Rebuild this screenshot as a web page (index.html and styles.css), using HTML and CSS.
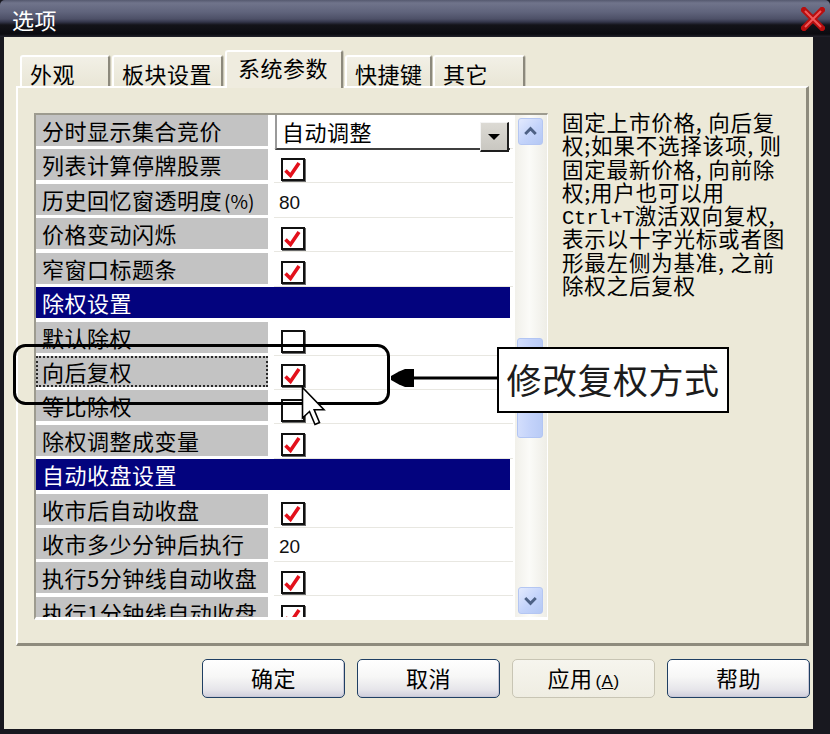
FILE: index.html
```html
<!DOCTYPE html>
<html lang="zh-CN">
<head>
<meta charset="utf-8">
<title>选项</title>
<link rel="stylesheet" href="styles.css">
</head>
<body>
<div class="window">
  <div class="titlebar">
    <span class="title">选项</span>
    <svg class="close" width="24" height="24" viewBox="0 0 24 24">
      <path d="M3 3 L21 21 M21 3 L3 21" stroke="#B80E0E" stroke-width="6" stroke-linecap="square"/>
      <path d="M4 4 L20 20 M20 4 L4 20" stroke="#F0585A" stroke-width="2"/>
    </svg>
  </div>
  <div class="client">
    <div class="tabs">
      <div class="tab w1">外观</div>
      <div class="tab w2">板块设置</div>
      <div class="tab w3 active">系统参数</div>
      <div class="tab w4">快捷键</div>
      <div class="tab w5">其它</div>
    </div>
    <div class="panel">
      <div class="grid">
        <div class="rows">
          <div class="row">
            <div class="label">分时显示集合竞价</div>
            <div class="value">
              <div class="combo"><span class="combo-text">自动调整</span><span class="drop"><i class="tri"></i></span></div>
            </div>
          </div>
          <div class="row">
            <div class="label">列表计算停牌股票</div>
            <div class="value"><span class="cb"><svg viewBox="0 0 19 19"><polyline points="2.5,10.5 7.5,15.5 16,3" fill="none" stroke="#E3101B" stroke-width="3.6"/></svg></span></div>
          </div>
          <div class="row">
            <div class="label">历史回忆窗透明度<span class="pct">(%)</span></div>
            <div class="value"><span class="num">80</span></div>
          </div>
          <div class="row">
            <div class="label">价格变动闪烁</div>
            <div class="value"><span class="cb"><svg viewBox="0 0 19 19"><polyline points="2.5,10.5 7.5,15.5 16,3" fill="none" stroke="#E3101B" stroke-width="3.6"/></svg></span></div>
          </div>
          <div class="row">
            <div class="label">窄窗口标题条</div>
            <div class="value"><span class="cb"><svg viewBox="0 0 19 19"><polyline points="2.5,10.5 7.5,15.5 16,3" fill="none" stroke="#E3101B" stroke-width="3.6"/></svg></span></div>
          </div>
          <div class="row">
            <div class="header">除权设置</div>
          </div>
          <div class="row">
            <div class="label">默认除权</div>
            <div class="value"><span class="cb"></span></div>
          </div>
          <div class="row">
            <div class="label focus">向后复权</div>
            <div class="value"><span class="cb"><svg viewBox="0 0 19 19"><polyline points="2.5,10.5 7.5,15.5 16,3" fill="none" stroke="#E3101B" stroke-width="3.6"/></svg></span></div>
          </div>
          <div class="row">
            <div class="label">等比除权</div>
            <div class="value"><span class="cb"></span></div>
          </div>
          <div class="row">
            <div class="label">除权调整成变量</div>
            <div class="value"><span class="cb"><svg viewBox="0 0 19 19"><polyline points="2.5,10.5 7.5,15.5 16,3" fill="none" stroke="#E3101B" stroke-width="3.6"/></svg></span></div>
          </div>
          <div class="row">
            <div class="header">自动收盘设置</div>
          </div>
          <div class="row">
            <div class="label">收市后自动收盘</div>
            <div class="value"><span class="cb"><svg viewBox="0 0 19 19"><polyline points="2.5,10.5 7.5,15.5 16,3" fill="none" stroke="#E3101B" stroke-width="3.6"/></svg></span></div>
          </div>
          <div class="row">
            <div class="label">收市多少分钟后执行</div>
            <div class="value"><span class="num">20</span></div>
          </div>
          <div class="row">
            <div class="label">执行5分钟线自动收盘</div>
            <div class="value"><span class="cb"><svg viewBox="0 0 19 19"><polyline points="2.5,10.5 7.5,15.5 16,3" fill="none" stroke="#E3101B" stroke-width="3.6"/></svg></span></div>
          </div>
          <div class="row">
            <div class="label">执行1分钟线自动收盘</div>
            <div class="value"><span class="cb"><svg viewBox="0 0 19 19"><polyline points="2.5,10.5 7.5,15.5 16,3" fill="none" stroke="#E3101B" stroke-width="3.6"/></svg></span></div>
          </div>
        </div>
        <div class="vscroll">
          <div class="sbtn"><svg width="24" height="25" viewBox="0 0 24 25"><path d="M6.5 15 L12 9.5 L17.5 15" fill="none" stroke="#4D6185" stroke-width="3"/></svg></div>
          <div class="track"><div class="thumb"></div></div>
          <div class="sbtn"><svg width="24" height="25" viewBox="0 0 24 25"><path d="M6.5 10 L12 15.5 L17.5 10" fill="none" stroke="#4D6185" stroke-width="3"/></svg></div>
        </div>
      </div>
      <div class="desc">
        <div class="dl">固定上市价格, 向后复</div>
        <div class="dl">权;如果不选择该项, 则</div>
        <div class="dl">固定最新价格, 向前除</div>
        <div class="dl">权;用户也可以用</div>
        <div class="dl"><span class="mono">Ctrl+T</span>激活双向复权,</div>
        <div class="dl">表示以十字光标或者图</div>
        <div class="dl">形最左侧为基准, 之前</div>
        <div class="dl">除权之后复权</div>
      </div>
    </div>
    <div class="buttons">
      <div class="btn">确定</div>
      <div class="btn">取消</div>
      <div class="btn soft">应用<span class="acc">(<u>A</u>)</span></div>
      <div class="btn">帮助</div>
    </div>
  </div>

  <svg class="annot" width="830" height="734" viewBox="0 0 830 734">
    <rect x="14.5" y="345.5" width="374" height="58" rx="11" ry="11" fill="none" stroke="#000" stroke-width="3"/>
    <line x1="410" y1="378" x2="498" y2="378" stroke="#000" stroke-width="3"/>
    <path d="M391 376 L399 371.5 L405 369 L414 369 L414 387 L405 387 L399 384.5 L391 380 Z" fill="#000"/>
  </svg>
  <div class="callout">修改复权方式</div>
  <svg class="cursor" width="26" height="42" viewBox="0 0 26 42">
    <path d="M1.5 1.5 L1.5 32 L8.5 25.5 L14 38.5 L18.5 36.5 L13.2 23.8 L23 23.8 Z" fill="#fff" stroke="#000" stroke-width="1.6" stroke-linejoin="miter"/>
  </svg>
</div>
</body>
</html>
```

FILE: styles.css
```css
* { box-sizing: border-box; }

html, body {
  margin: 0;
  padding: 0;
  background: #16161e;
}

.window {
  position: relative;
  width: 830px;
  height: 734px;
  display: flex;
  flex-direction: column;
  background: #18181f;
  font-family: "Noto Sans CJK SC", "Noto Sans", sans-serif;
  color: #000;
  overflow: hidden;
}

/* ---------- title bar ---------- */
.titlebar {
  flex: none;
  height: 37px;
  display: flex;
  align-items: center;
  padding-left: 12px;
  border-radius: 5px 5px 0 0;
  background: linear-gradient(to bottom,
    #55596f 0px, #70748b 3px, #60647c 12px, #4d5067 19px,
    #33354a 22px, #131319 25px, #0b0b10 34px, #23232c 37px);
}

.title {
  color: #fff;
  font-size: 22px;
  line-height: 24px;
  letter-spacing: 0.5px;
  margin-top: 1px;
}

.close {
  margin-left: auto;
  margin-right: 5px;
  margin-top: 1px;
}

/* ---------- client ---------- */
.client {
  flex: 1;
  margin: 0 17px 5px 4px;
  background: #ECE9D8;
  padding: 13px 4px 0 12px;
  display: flex;
  flex-direction: column;
}

/* ---------- tabs ---------- */
.tabs {
  flex: none;
  height: 36px;
  display: flex;
  align-items: flex-end;
  padding-left: 4px;
  position: relative;
  z-index: 2;
}

.tab {
  height: 31px;
  margin-right: 2px;
  padding-left: 8px;
  padding-top: 3px;
  font-size: 22px;
  line-height: 27px;
  letter-spacing: 0.5px;
  white-space: nowrap;
  background: linear-gradient(to bottom, #F2F0E6, #E9E6D6);
  border-top: 2px solid #fff;
  border-left: 2px solid #fff;
  border-right: 2px solid #8C897C;
  border-radius: 3px 3px 0 0;
  box-shadow: 1px 0 0 #C9C6B8;
}

.tab.w1 { width: 90px; }
.tab.w2 { width: 111px; }
.tab.w3 { width: 118px; }
.tab.w4 { width: 87px; margin-right: 1px; }
.tab.w5 { width: 92px; }

.tab.active {
  height: 38px;
  margin-bottom: -2px;
  padding-left: 11px;
  padding-top: 1px;
  background: #EFECDF;
  line-height: 28px;
}

/* ---------- panel ---------- */
.panel {
  flex: none;
  height: 560px;
  display: flex;
  align-items: flex-start;
  padding: 25px 0 0 16px;
  background: #ECE9D8;
  border-top: 2px solid #fff;
  border-left: 2px solid #fff;
  border-right: 3px solid #8E8B7D;
  border-bottom: 3px solid #8E8B7D;
  position: relative;
  z-index: 1;
}

.grid {
  flex: none;
  width: 514px;
  height: 507px;
  display: flex;
  background: #fff;
  border-top: 2px solid #9D9B8F;
  border-left: 2px solid #9D9B8F;
  border-right: 1px solid #fff;
  border-bottom: 3px solid #fff;
}

.rows {
  flex: 1;
  overflow: hidden;
  background: #fff;
}

.row {
  height: 34.43px;
  display: flex;
}

.label {
  flex: none;
  width: 232px;
  height: 31px;
  padding-left: 6px;
  background: #C3C3C3;
  font-size: 22px;
  line-height: 31px;
  letter-spacing: 0.5px;
  white-space: nowrap;
  overflow: hidden;
}

.pct {
  font-size: 19px;
  margin-left: 2px;
  letter-spacing: 0;
}

.label.focus {
  outline: 2px dotted #2a2a2a;
  outline-offset: -2px;
}

.value {
  flex: none;
  width: 239px;
  height: 34px;
  margin-left: 6px;
  padding-left: 7px;
  border-bottom: 1px solid #E8E7E1;
  position: relative;
}

.header {
  flex: none;
  width: 474px;
  height: 31px;
  padding-left: 6px;
  background: #03037E;
  color: #fff;
  font-size: 22px;
  line-height: 31px;
  letter-spacing: 0.5px;
  white-space: nowrap;
}

.cb {
  display: block;
  width: 24px;
  height: 23px;
  margin-top: 8.5px;
  border: 2px solid #111;
  background: #fff;
  box-shadow: 1px 1px 0 #6b6b6b;
}

.cb svg {
  display: block;
  width: 19px;
  height: 19px;
}

.num {
  display: block;
  margin-left: -2px;
  font-family: "Liberation Sans", Arial, sans-serif;
  font-size: 19px;
  line-height: 37px;
  color: #111;
}

/* combo */
.combo {
  position: relative;
  z-index: 1;
  display: flex;
  width: 235px;
  height: 37px;
  margin-top: -2px;
  margin-left: -6px;
  background: #fff;
  border-top: 2px solid #9A9A9A;
  border-left: 2px solid #9A9A9A;
  border-bottom: 2px solid #3F3F3F;
}

.combo-text {
  flex: 1;
  padding-left: 5px;
  font-size: 22px;
  line-height: 33px;
  letter-spacing: 0.5px;
}

.drop {
  flex: none;
  width: 29px;
  height: 30px;
  margin-top: 7px;
  margin-right: 1px;
  display: flex;
  align-items: center;
  justify-content: center;
  background: linear-gradient(#DCDAD4, #C9C7C1);
  border-top: 1px solid #F4F4F4;
  border-left: 1px solid #F4F4F4;
  border-right: 2px solid #1E1E1E;
  border-bottom: 2px solid #1E1E1E;
}

.tri {
  display: block;
  width: 0;
  height: 0;
  border-left: 6px solid transparent;
  border-right: 6px solid transparent;
  border-top: 6px solid #000;
}

/* scrollbar */
.vscroll {
  flex: none;
  width: 32px;
  display: flex;
  flex-direction: column;
  padding: 3px 4px 3px 3px;
  background: linear-gradient(to right, #F1F0EA, #FBFBF8 45%, #EEEDE6);
}

.sbtn {
  flex: none;
  height: 27px;
  border: 1px solid #B4C6F2;
  border-radius: 3px;
  background: linear-gradient(135deg, #E3EAFE, #C3D3FA 55%, #B4C8F4);
  display: flex;
  align-items: center;
  justify-content: center;
}

.track {
  flex: 1;
}

.thumb {
  height: 100px;
  margin-top: 193px;
  margin-left: -1px;
  border: 1px solid #B2C5F3;
  border-radius: 3px;
  background: linear-gradient(to right, #D3DEFC, #C4D3FA 50%, #B9CBF6);
}

/* description */
.desc {
  margin-left: 14px;
  margin-top: -3px;
  font-size: 21.5px;
  letter-spacing: 0.8px;
  white-space: nowrap;
  color: #000;
}

.dl {
  height: 23.3px;
  line-height: 23.3px;
}

.mono {
  font-family: "Liberation Mono", "DejaVu Sans Mono", monospace;
  font-size: 20.5px;
  letter-spacing: -0.2px;
}

/* buttons */
.buttons {
  flex: none;
  display: flex;
  justify-content: flex-end;
  gap: 12px;
  margin-top: 13px;
  margin-right: -1px;
}

.btn {
  width: 143px;
  height: 39px;
  border: 1px solid #1F3F63;
  border-radius: 5px;
  background: linear-gradient(to bottom, #FFFFFF 0%, #F7F7F6 45%, #E6E5EA 80%, #CFCEDC 100%);
  box-shadow: inset -1px -1px 0 #C9C8D6;
  font-size: 22px;
  line-height: 34px;
  text-align: center;
  letter-spacing: 0.5px;
}

.btn.soft {
  border-color: #C8C5B4;
  background: linear-gradient(to bottom, #F6F5EE, #EFEDE2);
  box-shadow: none;
}

.acc {
  font-family: "Liberation Sans", Arial, sans-serif;
  font-size: 17px;
  margin-left: 3px;
}

/* overlays */
.annot {
  position: absolute;
  left: 0;
  top: 0;
  pointer-events: none;
  z-index: 5;
}

.callout {
  position: absolute;
  left: 497px;
  top: 347px;
  width: 232px;
  height: 66px;
  z-index: 6;
  background: #fff;
  border: 2px solid #000;
  font-size: 35px;
  line-height: 60px;
  text-align: center;
  letter-spacing: 0.5px;
  color: #1c1c1c;
}

.cursor {
  position: absolute;
  left: 301px;
  top: 386px;
  z-index: 7;
}
```
